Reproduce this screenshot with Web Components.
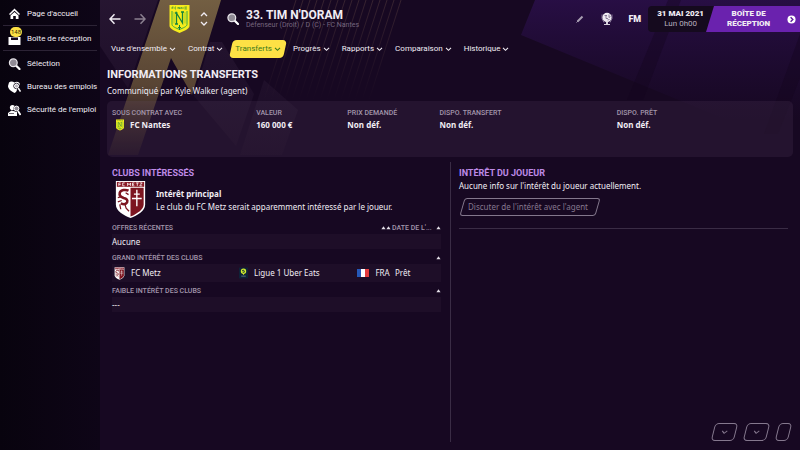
<!DOCTYPE html>
<html lang="fr">
<head>
<meta charset="utf-8">
<meta name="viewport" content="width=device-width, initial-scale=1">
<title>33. Tim N'Doram - Transferts</title>
<style>
  html, body {
    height: 100%;
  }

  body {
    margin: 0;
    background: #170822;
    color: #f1edf4;
    font: 400 8px/12px Roboto, "Liberation Sans", sans-serif;
    --text: "Noto Sans", "Liberation Sans", sans-serif;
    --muted: #a396ab;
    --accent: #bd8ae6;
    --yellow: #fde145;
    --purple: #6a22ae;
    --line: #3a2c45;
  }
</style>
</head>
<body>
<app-shell>
  <side-bar slot="side">
    <side-link icon="home" line>Page d'accueil</side-link>
    <side-link icon="inbox" badge="148" line>Boîte de réception</side-link>
    <side-link icon="search">Sélection</side-link>
    <side-link icon="jobs">Bureau des emplois</side-link>
    <side-link icon="security">Sécurité de l'emploi</side-link>
  </side-bar>

  <title-bar slot="top" name="33. TIM N'DORAM" info="Défenseur (Droit) / D (C) - FC Nantes"></title-bar>

  <tab-bar slot="top">
    <tab-item>Vue d'ensemble</tab-item>
    <tab-item>Contrat</tab-item>
    <tab-item active>Transferts</tab-item>
    <tab-item>Progrès</tab-item>
    <tab-item>Rapports</tab-item>
    <tab-item>Comparaison</tab-item>
    <tab-item>Historique</tab-item>
  </tab-bar>

  <page-heading heading="INFORMATIONS TRANSFERTS">Communiqué par Kyle Walker (agent)</page-heading>

  <info-panel>
    <info-cell label="SOUS CONTRAT AVEC" icon="nantes">FC Nantes</info-cell>
    <info-cell label="VALEUR">160 000 €</info-cell>
    <info-cell label="PRIX DEMANDÉ">Non déf.</info-cell>
    <info-cell label="DISPO. TRANSFERT">Non déf.</info-cell>
    <info-cell label="DISPO. PRÊT">Non déf.</info-cell>
  </info-panel>

  <split-view>
    <info-section slot="left" heading="CLUBS INTÉRESSÉS">
      <club-note heading="Intérêt principal">Le club du FC Metz serait apparemment intéressé par le joueur.</club-note>
      <club-table kind="offers"></club-table>
      <club-table kind="high"></club-table>
      <club-table kind="low"></club-table>
    </info-section>
    <info-section slot="right" heading="INTÉRÊT DU JOUEUR">
      <player-interest>Aucune info sur l'intérêt du joueur actuellement.</player-interest>
    </info-section>
  </split-view>

  <foot-actions slot="bottom"></foot-actions>
</app-shell>

<script>
const METZ = `
  <path d="M1 1h30v24c0 7-8 11-15 14C9 36 1 32 1 25z" fill="#fff"/>
  <path d="M16 8h13.500v17c0 5-6 9-13.500 12.500z" fill="#7c1520"/>
  <path d="M2 2h28v5H2z" fill="#8a1c28"/>
  <path d="M4 6V3h2M4 4.700h2M10 3H8v3h2M13 6V3l1.500 2L16 3v3M20 3h-2v3h2M18 4.500h1.500M21.500 3h3M23 3v3M25.500 3H28l-2.500 3H28" fill="none" stroke="#fff" stroke-width=".8"/>
  <path d="M22.500 10v17M19.500 14.500h6M17.500 19h10" fill="none" stroke="#fff" stroke-width="1.400"/>
  <path d="M14 11c-3-1.500-8-1-9 2-.8 3 1 4.500 4 5.500 3 .8 4.500 2 3.500 4.500-1 2-4 2-6.500 1" fill="none" stroke="#7c1520" stroke-width="2.600"/>
  <path d="M10 24l1.500 5 3 3M3 18l4-1M7 21l-4 1.500M5 25l1 5M11 13l3 2" fill="none" stroke="#7c1520" stroke-width="1.300"/>`;

const NANTES = `
  <path d="M1 1h20v21c0 3-6 5-10 7-4-2-10-4-10-7z" fill="#f6ec1c"/>
  <path d="M3.500 7v13.500c0 2 4 3.500 7.500 5 3.500-1.500 7.500-3 7.500-5V7" fill="none" stroke="#3aa845" stroke-width="1"/>
  <path d="M5.500 8v11.500M16.500 8v11.500" stroke="#8cc832" stroke-width=".8"/>
  <path d="M8 20V9l6 10V8M6.500 9H9M12.500 8h3M6.500 20h3" fill="none" stroke="#14823c" stroke-width="1.300"/>
  <path d="M3.500 5V3H5M3.500 4H5M7.500 3h-1v2h1M9.500 5V3l1.500 2V3M12 5l.7-2 .7 2M14.500 3v2M16 3h2.500M16 4h2M16 5h2.500" fill="none" stroke="#2a8c3a" stroke-width=".6"/>
  <path d="M11 21v5M9.500 23.500h3" stroke="#14823c"/>`;

const ICONS = {
  home: ["0 0 12 12", `<path d="M6 .5 11.500 6l-1 1L6 2.800 1.500 7l-1-1z" fill="#fff"/><path d="M6 4l4 3.500V11H7.300V8H4.700v3H2V7.500z" fill="#fff"/>`],
  inbox: ["0 0 12 12", `<path d="M0 4h12v8H0z" fill="#fff"/><path d="M2.500 4.500h7V7h-7z" fill="#16091f"/>`],
  search: ["0 0 12 12", `<path d="M7.500 7.500 11 11" stroke="#fff" stroke-width="2.200" stroke-linecap="round"/><circle cx="4.800" cy="4.800" r="3.900" fill="#8f8a94" stroke="#e8e5ea" stroke-width="1.200"/>`],
  jobs: ["0 0 13 12", `<path d="M1 1.500C2.500 0 5 .5 6.500 1.500 9 0 11 1 12 3L8 11 6.500 12C3 10 0 8 0 5z" fill="#fff"/><circle cx="8.500" cy="5" r="2.700" fill="#b9b4bd" stroke="#0b0413"/><circle cx="8.500" cy="5" r="2" fill="none" stroke="#fff"/><path d="m10.200 7 2 3" stroke="#0b0413" stroke-width="3"/><path d="m10.200 7 2.300 3.500" stroke="#fff" stroke-width="1.500"/>`],
  security: ["0 0 13 12", `<circle cx="4.500" cy="3.500" r="2.600" fill="#fff"/><path d="M0 12V9l3.500-2.500L9 8v4z" fill="#fff"/><path d="M1 9.500h5" stroke="#0b0413" stroke-width=".6"/><circle cx="8.500" cy="4.500" r="3" fill="#0b0413"/><circle cx="8.500" cy="4.500" r="2.400" fill="#8f8a94" stroke="#fff"/><path d="m10 7 2.500 4" stroke="#fff" stroke-width="1.800"/>`],
  back: ["0 0 12 12", `<path d="M11.500 6H1M5.500 1.200 1 6l4.500 4.800" fill="none" stroke="currentColor" stroke-width="1.500"/>`],
  forward: ["0 0 12 12", `<path d="M.5 6H11M6.500 1.200 11 6l-4.500 4.800" fill="none" stroke="currentColor" stroke-width="1.500"/>`],
  up: ["0 0 8 6", `<path d="M1 5l3-3 3 3" fill="none" stroke="currentColor" stroke-width="1.300"/>`],
  down: ["0 0 8 6", `<path d="M1 1l3 3 3-3" fill="none" stroke="currentColor" stroke-width="1.300"/>`],
  pencil: ["0 0 12 12", `<path d="M3.500 8.500 8.500 3.500" stroke="#a99fb3" stroke-width="2"/><path d="M2.500 9.500 4 8" stroke="#a99fb3"/>`],
  trophy: ["0 0 12 14", `<circle cx="6" cy="5.500" r="4.700" fill="#eeeaf1"/><path d="M5 9.500h2V12h2v1H3v-1h2z" fill="#d5cfda"/><path d="M3.500 3.500h2.500M5 3.500v3h2M8 2.500v3l1.500-1M6.500 8l2-.5" fill="none" stroke="#4a3560" stroke-width=".6"/><path d="M1 2.500v4l2 4M11 2.500v4l-2 4" fill="none" stroke="#9a8ca8" stroke-width=".8"/>`],
  next: ["0 0 10 10", `<circle cx="5" cy="5" r="4.500" fill="#fff"/><path d="M4 2.500 6.500 5 4 7.500" fill="none" stroke="#5b1a9c" stroke-width="1.500"/>`],
  sort: ["0 0 6 4", `<path d="M3 0l2.500 3.500h-5z" fill="#e4dfe8"/>`],
  france: ["0 0 12 8", `<path d="M0 0h4v8H0z" fill="#2558b8"/><path d="M4 0h4v8H4z" fill="#fff"/><path d="M8 0h4v8H8z" fill="#e23b3f"/>`],
  ligue1: ["0 0 10 12", `<path d="M0 0h10v12H0z" fill="#0e2238"/><circle cx="5" cy="4" r="2.300" fill="none" stroke="#d3ee2c" stroke-width="1.400"/><path d="M3 5l4-2M5 6v2" stroke="#d3ee2c"/><path d="M2.500 9.500h5" stroke="#5c7289"/>`],
  metz: ["0 0 32 40", METZ],
  nantes: ["0 0 22 30", NANTES]
};

function icon(name, width, height) {
  const [box, body] = ICONS[name];
  return `<svg viewBox="${box}" width="${width}" height="${height}" aria-hidden="true">${body}</svg>`;
}

// shared reset, put in front of each element's own rules
const RESET = `
  * { box-sizing: border-box; margin: 0; padding: 0; }
  :host { display: block; }
  svg { display: block; flex: none; }
  button { border: 0; background: none; color: inherit; font: inherit; cursor: pointer; }
  a { color: inherit; text-decoration: none; }
`;

class BaseElement extends HTMLElement {
  constructor() {
    super();
    this.shadowDOM = this.attachShadow({ mode: "open" });
  }

  connectedCallback() {
    this.shadowDOM.innerHTML = `<style>${RESET}${this.styles()}</style>${this.render()}`;
  }

  styles() {
    return "";
  }

  render() {
    return "<slot></slot>";
  }
}

class AppShell extends BaseElement {
  styles() {
    return `
      :host { display: flex; min-height: 100vh; }
      main {
        position: relative;
        flex: 1;
        min-width: 0;
        display: flex;
        flex-direction: column;
        padding-left: 7px;
      }
      .art { position: absolute; inset: 0; width: 100%; height: 100%; }
      .content { position: relative; flex: 1; display: flex; flex-direction: column; padding-right: 7px; }
      .top { position: relative; }
      .bottom { position: absolute; right: 10px; bottom: 9px; }
    `;
  }

  render() {
    const lines = [];
    for (let i = 0; i < 16; i++) {
      const x = 196 + i * 7;
      lines.push(`<path d="M${x} 0 L${x - 32} 100"/>`);
    }
    return `
      <slot name="side"></slot>
      <main>
        <svg class="art" viewBox="0 0 700 450" preserveAspectRatio="xMinYMin slice" aria-hidden="true">
          <defs>
            <linearGradient id="gold" x1="0" y1="0" x2="0" y2="155" gradientUnits="userSpaceOnUse">
              <stop offset="0" stop-color="#7d6846" stop-opacity=".9"/>
              <stop offset=".55" stop-color="#80693f" stop-opacity=".62"/>
              <stop offset="1" stop-color="#65502f" stop-opacity=".1"/>
            </linearGradient>
            <linearGradient id="pale" x1="0" y1="0" x2="0" y2="155" gradientUnits="userSpaceOnUse">
              <stop offset="0" stop-color="#94779e" stop-opacity=".12"/>
              <stop offset="1" stop-color="#94779e" stop-opacity=".02"/>
            </linearGradient>
            <linearGradient id="violet" x1="0" y1="0" x2="0" y2="120" gradientUnits="userSpaceOnUse">
              <stop offset="0" stop-color="#2f1153" stop-opacity=".7"/>
              <stop offset="1" stop-color="#260e45" stop-opacity="0"/>
            </linearGradient>
            <linearGradient id="thin" x1="0" y1="0" x2="0" y2="100" gradientUnits="userSpaceOnUse">
              <stop offset="0" stop-color="#806050" stop-opacity=".3"/>
              <stop offset="1" stop-color="#806050" stop-opacity="0"/>
            </linearGradient>
          </defs>
          <path d="M0 0h58L28 88 0 46z" fill="url(#pale)"/>
          <path d="M60 0h61L92 95 71 58 38 155H8z" fill="url(#gold)"/>
          <path d="M110 42h12l32 52-18 52-42-50zM164 80l34 30-16 45h-42z" fill="url(#pale)"/>
          <g fill="none" stroke="url(#thin)">${lines.join("")}</g>
          <path d="M435 0h265v150L421 35z" fill="url(#violet)"/>
          <path d="M568 0h13l-38 100h-16zM700 34v44l-22 56h-14z" fill="#14051f" opacity=".4"/>
        </svg>
        <div class="top"><slot name="top"></slot></div>
        <div class="content"><slot></slot></div>
        <div class="bottom"><slot name="bottom"></slot></div>
      </main>
    `;
  }
}

class SideBar extends BaseElement {
  styles() {
    return `
      :host { flex: none; width: 100px; background: linear-gradient(90deg, #08030e, #0e0517); }
      nav { padding: 3px 3px 0; }
    `;
  }

  render() {
    return `<nav><slot></slot></nav>`;
  }
}

class SideLink extends BaseElement {
  styles() {
    return `
      :host { margin-bottom: 1px; }
      :host([line]) { border-bottom: 1px solid #2c2335; margin-bottom: 2px; }
      a { display: flex; align-items: center; gap: 6px; height: 22px; padding-left: 5px; white-space: nowrap; }
      .icon { position: relative; width: 13px; }
      .badge {
        position: absolute;
        left: 2px;
        top: -6px;
        padding: 0 1px;
        border-radius: 6px;
        background: var(--yellow);
        color: #352a08;
        font-size: 6px;
        line-height: 10px;
      }
    `;
  }

  render() {
    const badge = this.getAttribute("badge");
    return `
      <a href="#">
        <span class="icon">${icon(this.getAttribute("icon"), 13, 12)}${badge ? `<span class="badge">${badge}</span>` : ""}</span>
        <slot></slot>
      </a>
    `;
  }
}

class TitleBar extends BaseElement {
  styles() {
    return `
      header { display: flex; align-items: center; height: 38px; }
      .back { margin-left: 2px; }
      .forward { margin-left: 13px; color: #8b8090; }
      .crest { margin-left: 22px; }
      .switch { display: flex; flex-direction: column; gap: 4px; margin-left: 9px; }
      .find { margin-left: 19px; }
      .who { flex: 1; margin-left: 7px; white-space: nowrap; }
      h1 { font-size: 12px; line-height: 12px; font-weight: 700; }
      p { color: #75667f; font-size: 7px; line-height: 9px; }
      .tools { display: flex; align-items: center; gap: 15px; margin-right: 7px; }
      .fm { font-size: 9px; font-weight: 900; }
      .date {
        padding: 3px 10px 3px 9px;
        height: 26px;
        border-radius: 4px 0 0 4px;
        background: #150a1e;
        text-align: center;
        line-height: 10px;
        white-space: nowrap;
      }
      .date b { display: block; font-weight: 900; }
      .date span { color: #b9afbf; }
      .continue {
        display: flex;
        align-items: center;
        justify-content: space-between;
        width: 94px;
        height: 26px;
        margin-left: -8px;
        padding: 0 4px 0 21px;
        background: var(--purple);
        clip-path: polygon(8px 0, 100% 0, 100% 100%, 0 100%);
        font-weight: 900;
        line-height: 10px;
      }
    `;
  }

  render() {
    return `
      <header>
        <button class="back" aria-label="Retour">${icon("back", 12, 12)}</button>
        <button class="forward" aria-label="Suivant">${icon("forward", 12, 12)}</button>
        <span class="crest">${icon("nantes", 23, 30)}</span>
        <span class="switch">
          <button aria-label="Joueur précédent">${icon("up", 8, 6)}</button>
          <button aria-label="Joueur suivant">${icon("down", 8, 6)}</button>
        </span>
        <button class="find" aria-label="Rechercher">${icon("search", 12, 12)}</button>
        <div class="who">
          <h1>${this.getAttribute("name")}</h1>
          <p>${this.getAttribute("info")}</p>
        </div>
        <div class="tools">
          <button aria-label="Modifier">${icon("pencil", 12, 12)}</button>
          <button aria-label="Compétitions">${icon("trophy", 12, 14)}</button>
          <button class="fm">FM</button>
        </div>
        <div class="date"><b>31 MAI 2021</b><span>Lun 0h00</span></div>
        <button class="continue"><span>BOÎTE DE<br>RÉCEPTION</span>${icon("next", 9, 9)}</button>
      </header>
    `;
  }
}

class TabBar extends BaseElement {
  styles() {
    return `
      nav { display: flex; padding: 2px 0 0 4px; gap: 12px; }
    `;
  }

  render() {
    return `<nav><slot></slot></nav>`;
  }
}

class TabItem extends BaseElement {
  styles() {
    return `
      a { position: relative; display: flex; align-items: center; gap: 2px; height: 18px; white-space: nowrap; }
      :host([active]) { color: #3b7a1c; }
      :host([active]) a::before {
        content: "";
        position: absolute;
        inset: 0 -4px;
        border-radius: 4px;
        background: var(--yellow);
        transform: skewX(-12deg);
      }
      span, svg { position: relative; }
    `;
  }

  render() {
    return `<a href="#"><span><slot></slot></span>${icon("down", 7, 5)}</a>`;
  }
}

class PageHeading extends BaseElement {
  styles() {
    return `
      :host { padding-top: 9px; }
      h2 { font-size: 11px; line-height: 15px; font-weight: 700; }
      p { padding: 3px 0 4px; font-family: var(--text); }
    `;
  }

  render() {
    return `<h2>${this.getAttribute("heading")}</h2><p><slot></slot></p>`;
  }
}

class InfoPanel extends BaseElement {
  styles() {
    return `
      dl {
        display: grid;
        grid-template-columns: 144fr 91fr 92fr 177fr 171fr;
        min-height: 56px;
        padding: 6px 5px;
        border-radius: 5px;
        background: rgba(120, 90, 130, .14);
      }
    `;
  }

  render() {
    return `<dl><slot></slot></dl>`;
  }
}

class InfoCell extends BaseElement {
  styles() {
    return `
      dt { color: var(--muted); font-size: 7px; font-weight: 500; }
      dd { display: flex; align-items: center; gap: 5px; font-weight: 700; font-family: var(--text); }
      svg { margin-left: 3px; }
    `;
  }

  render() {
    const name = this.getAttribute("icon");
    return `
      <dt>${this.getAttribute("label")}</dt>
      <dd>${name ? icon(name, 10, 12) : ""}<slot></slot></dd>
    `;
  }
}

class SplitView extends BaseElement {
  styles() {
    return `
      :host { flex: 1; display: grid; grid-template-columns: 343fr 343fr; padding: 5px 0 8px; }
      .left { padding: 4px 9px 0 5px; }
      .right { padding: 4px 5px 0 8px; border-left: 1px solid var(--line); }
    `;
  }

  render() {
    return `
      <div class="left"><slot name="left"></slot></div>
      <div class="right"><slot name="right"></slot></div>
    `;
  }
}

class InfoSection extends BaseElement {
  styles() {
    return `h3 { color: var(--accent); font-size: 9px; line-height: 14px; font-weight: 700; }`;
  }

  render() {
    return `<h3>${this.getAttribute("heading")}</h3><slot></slot>`;
  }
}

class ClubNote extends BaseElement {
  styles() {
    return `
      :host { display: flex; align-items: center; gap: 9px; padding-left: 2px; font-family: var(--text); }
      h4 { font-size: 8px; line-height: 13px; font-weight: 700; }
      p { line-height: 13px; }
    `;
  }

  render() {
    return `
      ${icon("metz", 33, 39)}
      <div><h4>${this.getAttribute("heading")}</h4><p><slot></slot></p></div>
    `;
  }
}

const TABLES = {
  offers: {
    title: `<th colspan="2">OFFRES RÉCENTES</th>
      <th class="date"><div>${icon("sort", 5, 4)}${icon("sort", 5, 4)}<span>DATE DE L'...</span></div></th>`,
    row: `<td colspan="4">Aucune</td>`
  },
  high: {
    title: `<th colspan="3">GRAND INTÉRÊT DES CLUBS</th>`,
    row: `
      <td class="club"><div>${icon("metz", 11, 13)}FC Metz</div></td>
      <td class="league"><div>${icon("ligue1", 9, 12)}Ligue 1 Uber Eats</div></td>
      <td class="nation"><div>${icon("france", 12, 8)}FRA</div></td>
      <td>Prêt</td>`
  },
  low: {
    title: `<th colspan="3">FAIBLE INTÉRÊT DES CLUBS</th>`,
    row: `<td colspan="4">---</td>`
  }
};

class ClubTable extends BaseElement {
  styles() {
    return `
      table { width: 100%; border-collapse: collapse; }
      th { height: 15px; padding-top: 2px; color: var(--muted); font-size: 7px; font-weight: 500; text-align: left; }
      td { height: 15px; background: #1e0e28; font-family: var(--text); }
      div { display: flex; align-items: center; }
      .mark { width: 6px; }
      .mark div { justify-content: flex-end; }
      .date { width: 54px; }
      .date span { padding-left: 1px; white-space: nowrap; }
      :host([kind="high"]) td { height: 18px; }
      .club { width: 38%; }
      .league { width: 36%; }
      .nation { width: 12%; }
      td div { gap: 6px; padding-left: 2px; white-space: nowrap; }
    `;
  }

  render() {
    const { title, row } = TABLES[this.getAttribute("kind")];
    return `
      <table>
        <thead><tr>${title}<th class="mark"><div>${icon("sort", 5, 4)}</div></th></tr></thead>
        <tbody><tr>${row}</tr></tbody>
      </table>
    `;
  }
}

class PlayerInterest extends BaseElement {
  styles() {
    return `
      :host { font-family: var(--text); }
      button { position: relative; height: 18px; margin: 6px 0 12px; padding: 0 13px 0 9px; color: #85778e; }
      button::before {
        content: "";
        position: absolute;
        inset: 0 3px;
        border: 1px solid #83778c;
        border-radius: 3px;
        transform: skewX(-16deg);
      }
      hr { border: 0; border-top: 1px solid var(--line); }
    `;
  }

  render() {
    return `
      <p><slot></slot></p>
      <button>Discuter de l'intérêt avec l'agent</button>
      <hr>
    `;
  }
}

class FootActions extends BaseElement {
  styles() {
    return `
      :host { display: flex; gap: 9px; }
      button {
        display: grid;
        place-items: center;
        width: 23px;
        height: 18px;
        border: 1px solid #85788e;
        border-radius: 4px;
        color: #85788e;
        transform: skewX(-14deg);
      }
      button:last-child { width: 13px; }
    `;
  }

  render() {
    return `
      <button aria-label="Menu 1">${icon("down", 7, 5)}</button>
      <button aria-label="Menu 2">${icon("down", 7, 5)}</button>
      <button aria-label="Menu 3"></button>
    `;
  }
}

customElements.define("app-shell", AppShell);
customElements.define("side-bar", SideBar);
customElements.define("side-link", SideLink);
customElements.define("title-bar", TitleBar);
customElements.define("tab-bar", TabBar);
customElements.define("tab-item", TabItem);
customElements.define("page-heading", PageHeading);
customElements.define("info-panel", InfoPanel);
customElements.define("info-cell", InfoCell);
customElements.define("split-view", SplitView);
customElements.define("info-section", InfoSection);
customElements.define("club-note", ClubNote);
customElements.define("club-table", ClubTable);
customElements.define("player-interest", PlayerInterest);
customElements.define("foot-actions", FootActions);
</script>
</body>
</html>
